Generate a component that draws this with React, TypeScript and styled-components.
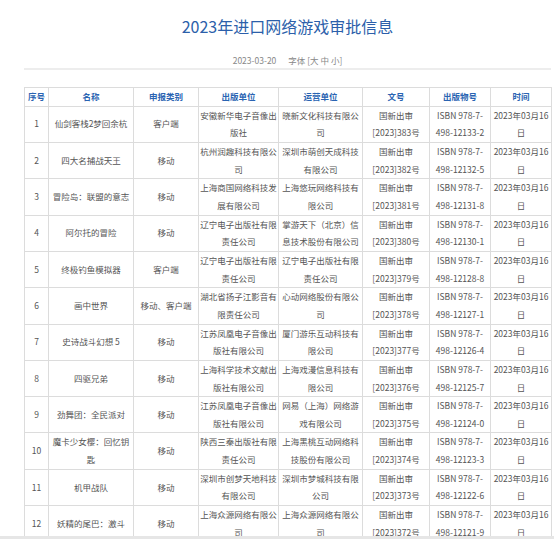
import React from "react";
import styled, { createGlobalStyle } from "styled-components";

const GlobalStyle = createGlobalStyle`
  html, body {
    margin: 0;
    padding: 0;
    background: #ffffff;
    overflow: hidden;
  }
  body {
    font-family: "Noto Sans CJK SC", "Noto Sans", sans-serif;
  }
`;

const Page = styled.div`
  width: 527px;
  padding: 16px 0 0 24px;
`;

const Title = styled.h1`
  margin: 0;
  text-align: center;
  font-size: 16px;
  line-height: 20px;
  font-weight: normal;
  color: #2c5faa;
`;

const Meta = styled.div`
  margin-top: 18px;
  text-align: center;
  font-size: 8.5px;
  line-height: 12px;
  color: #888888;
`;

const MetaDate = styled.span`
  margin-right: 12px;
`;

const Divider = styled.div`
  margin-top: 2px;
  height: 2px;
  background: #ededed;
`;

const Table = styled.table`
  margin-top: 17px;
  border-collapse: collapse;
  table-layout: fixed;
  width: 527px;
  font-size: 8.5px;
  line-height: 17.65px;
  color: #555555;
`;

const Th = styled.th`
  border: 1px solid #dcdcdc;
  padding: 0 1px;
  font-weight: bold;
  color: #2a64b2;
  text-align: center;
`;

const Td = styled.td`
  border: 1px solid #dcdcdc;
  padding: 0 1px;
  text-align: center;
  vertical-align: middle;
`;

const BottomBar = styled.div`
  position: fixed;
  left: 0;
  right: 0;
  bottom: 0;
  height: 3px;
  background: #e6e6e6;
`;

type Row = {
  name: string;
  kind: string;
  publisher: string;
  operator: string;
  doc: string;
  isbn: string;
};

const rows: Row[] = [
  { name: "仙剑客栈2梦回余杭", kind: "客户端", publisher: "安徽新华电子音像出版社", operator: "晓新文化科技有限公司", doc: "383", isbn: "498-12133-2" },
  { name: "四大名捕战天王", kind: "移动", publisher: "杭州润趣科技有限公司", operator: "深圳市萌创天成科技有限公司", doc: "382", isbn: "498-12132-5" },
  { name: "冒险岛：联盟的意志", kind: "移动", publisher: "上海商国网络科技发展有限公司", operator: "上海悠玩网络科技有限公司", doc: "381", isbn: "498-12131-8" },
  { name: "阿尔托的冒险", kind: "移动", publisher: "辽宁电子出版社有限责任公司", operator: "掌游天下（北京）信息技术股份有限公司", doc: "380", isbn: "498-12130-1" },
  { name: "终极钓鱼模拟器", kind: "客户端", publisher: "辽宁电子出版社有限责任公司", operator: "辽宁电子出版社有限责任公司", doc: "379", isbn: "498-12128-8" },
  { name: "画中世界", kind: "移动、客户端", publisher: "湖北省扬子江影音有限责任公司", operator: "心动网络股份有限公司", doc: "378", isbn: "498-12127-1" },
  { name: "史诗战斗幻想 5", kind: "移动", publisher: "江苏凤凰电子音像出版社有限公司", operator: "厦门游乐互动科技有限公司", doc: "377", isbn: "498-12126-4" },
  { name: "四驱兄弟", kind: "移动", publisher: "上海科学技术文献出版社有限公司", operator: "上海戏漫信息科技有限公司", doc: "376", isbn: "498-12125-7" },
  { name: "劲舞团：全民派对", kind: "移动", publisher: "江苏凤凰电子音像出版社有限公司", operator: "网易（上海）网络游戏有限公司", doc: "375", isbn: "498-12124-0" },
  { name: "魔卡少女樱：回忆钥匙", kind: "移动", publisher: "陕西三秦出版社有限责任公司", operator: "上海黑桃互动网络科技股份有限公司", doc: "374", isbn: "498-12123-3" },
  { name: "机甲战队", kind: "移动", publisher: "深圳市创梦天地科技有限公司", operator: "深圳市梦城科技有限公司", doc: "373", isbn: "498-12122-6" },
  { name: "妖精的尾巴：激斗", kind: "移动", publisher: "上海众源网络有限公司", operator: "上海众源网络有限公司", doc: "372", isbn: "498-12121-9" },
];

const colWidths = [24, 85, 65, 80, 84, 67, 61, 61];
const headers = ["序号", "名称", "申报类别", "出版单位", "运营单位", "文号", "出版物号", "时间"];

export default function App() {
  return (
    <>
      <GlobalStyle />
      <Page>
        <Title>2023年进口网络游戏审批信息</Title>
        <Meta>
          <MetaDate>2023-03-20</MetaDate>字体 [大 中 小]
        </Meta>
        <Divider />
        <Table>
          <colgroup>
            {colWidths.map((w, i) => (
              <col key={i} style={{ width: w }} />
            ))}
          </colgroup>
          <thead>
            <tr>
              {headers.map((h) => (
                <Th key={h}>{h}</Th>
              ))}
            </tr>
          </thead>
          <tbody>
            {rows.map((r, i) => (
              <tr key={i}>
                <Td>{i + 1}</Td>
                <Td>{r.name}</Td>
                <Td>{r.kind}</Td>
                <Td>{r.publisher}</Td>
                <Td>{r.operator}</Td>
                <Td>{`国新出审[2023]${r.doc}号`}</Td>
                <Td>{`ISBN 978-7-\u200B${r.isbn}`}</Td>
                <Td>2023年03月16日</Td>
              </tr>
            ))}
          </tbody>
        </Table>
      </Page>
      <BottomBar />
    </>
  );
}
